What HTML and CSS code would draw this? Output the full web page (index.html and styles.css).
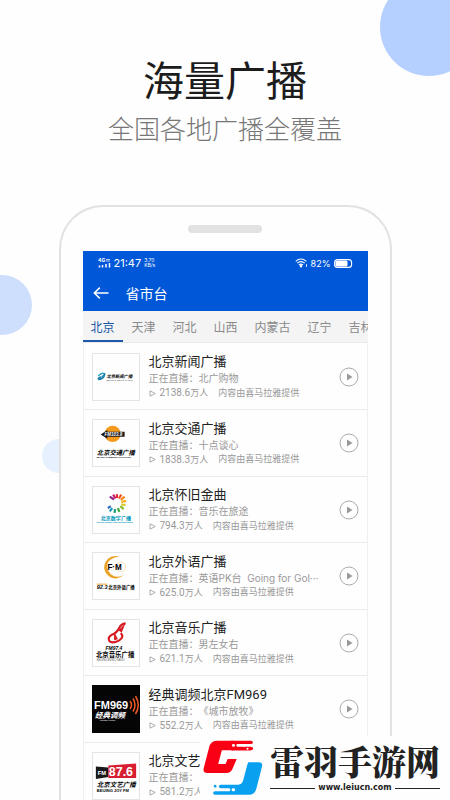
FILE: index.html
```html
<!DOCTYPE html>
<html lang="zh-CN">
<head>
<meta charset="utf-8">
<meta name="viewport" content="width=device-width, initial-scale=1">
<title>海量广播</title>
<link rel="stylesheet" href="styles.css">
</head>
<body>
<div class="page">
  <span class="bubble bubble-top"></span>
  <span class="bubble bubble-left"></span>
  <span class="bubble bubble-small"></span>

  <header class="hero">
    <h1 class="hero-title">海量广播</h1>
    <p class="hero-sub">全国各地广播全覆盖</p>
  </header>

  <main class="phone">
    <div class="speaker"></div>
    <div class="screen">
      <div class="topbar">
        <div class="status">
          <svg class="signal" viewBox="0 0 13 12" width="13" height="12"><text x="0" y="5" class="net">4G</text><path d="M8 2.5h4M8 4h4" stroke="#fff" stroke-width=".7"/><path d="M1.5 8.5v2M4.5 8v2.5M8 7v3.500M11.500 6v4.500" stroke="#fff" stroke-width="1.500"/></svg>
          <span class="time">21:47</span>
          <span class="speed"><span>3.70</span><span>KB/s</span></span>
          <svg class="wifi" viewBox="0 0 13 10" width="13" height="10" fill="none" stroke="#fff" stroke-width="1.100"><path d="M.7 3.300Q6 -1.300 11.300 3.300M2.300 5.200Q6 2 9.700 5.200M4 7Q6 5.300 8 7"/><circle cx="6" cy="8.300" r=".7" fill="#fff"/><path d="M11.500 6v3" stroke-width=".8"/></svg>
          <span class="percent">82%</span>
          <svg viewBox="0 0 19 9" width="19" height="9"><rect x=".6" y=".6" width="17" height="7.800" rx="3" fill="none" stroke="#fff" stroke-width="1.100"/><rect x="1.500" y="1.500" width="12" height="6" rx="1.500" fill="#fff"/></svg>
        </div>
        <div class="titlebar">
          <button class="back" type="button" aria-label="返回"><svg viewBox="0 0 16 12" width="16" height="12" fill="none" stroke="#fff" stroke-width="1.500"><path d="M15.500 6H1.500M6.800 .6L1.300 6l5.500 5.400"/></svg></button>
          <h2 class="title">省市台</h2>
        </div>
      </div>

      <nav class="tabs">
        <a class="tab active" href="#">北京</a>
        <a class="tab" href="#">天津</a>
        <a class="tab" href="#">河北</a>
        <a class="tab" href="#">山西</a>
        <a class="tab" href="#">内蒙古</a>
        <a class="tab" href="#">辽宁</a>
        <a class="tab" href="#">吉林</a>
      </nav>

      <ul class="stations">
        <li class="station">
          <svg class="logo" viewBox="0 0 48 48">
            <g fill="none" stroke-linecap="round"><path d="M6 22.500Q9 19 12 20.500Q13 22 9.500 23.500" stroke="#28a3c4" stroke-width="1.500"/><path d="M12 21Q11.500 26 6 26.500Q4.500 25.500 8 24" stroke="#1f7fa8" stroke-width="1.700"/></g>
            <text x="14" y="25" class="brush" font-size="4.500">北京新闻广播</text>
            <text x="14" y="28.300" font-size="2.600" fill="#555">BEIJING NEWS RADIO</text>
          </svg>
          <div class="info"><h3 class="name">北京新闻广播</h3><p class="live">正在直播：北广购物</p>
          <p class="meta"><svg class="tri" viewBox="0 0 7 7"><path d="M1 .8v5.400L6.200 3.500z"/></svg><span><span class="num">2138.6</span>万人</span><span class="source">内容由喜马拉雅提供</span></p></div>
          <button class="play" type="button" aria-label="播放"><svg viewBox="0 0 20 20"><circle cx="10" cy="10" r="9"/><path d="M8 6.500v7l5.500-3.500z"/></svg></button>
        </li>
        <li class="station">
          <svg class="logo" viewBox="0 0 48 48">
            <circle cx="20.500" cy="14.500" r="8.500" fill="#f39a1e"/><path d="M8 15L15 10.500V12.300H33V17.500H15V19.500z" fill="#191919"/>
            <text x="12" y="16.800" font-size="4.700" font-weight="bold" font-style="italic" fill="#fff">FM103.9</text>
            <text x="4" y="36" class="brush" font-size="6.600">北京交通广播</text>
            <text x="4" y="39.300" font-size="2.200" font-weight="bold">BEIJING COMMUNICATION RADIO</text>
          </svg>
          <div class="info"><h3 class="name">北京交通广播</h3><p class="live">正在直播：十点谈心</p>
          <p class="meta"><svg class="tri" viewBox="0 0 7 7"><path d="M1 .8v5.400L6.200 3.500z"/></svg><span><span class="num">1838.3</span>万人</span><span class="source">内容由喜马拉雅提供</span></p></div>
          <button class="play" type="button" aria-label="播放"><svg viewBox="0 0 20 20"><circle cx="10" cy="10" r="9"/><path d="M8 6.500v7l5.500-3.500z"/></svg></button>
        </li>
        <li class="station">
          <svg class="logo" viewBox="0 0 48 48">
            <g stroke-width="2.300" fill="none"><path d="M22 13l-4.500-3" stroke="#8c2d87"/><path d="M23.500 12l-2.500-4" stroke="#c81f6c"/><path d="M25 11.500V7.500" stroke="#e62c36"/><path d="M27 12l2.500-4" stroke="#ec5228"/><path d="M29 13.500l4-3.500" stroke="#f28a1e"/><path d="M29.500 15.500l5-1" stroke="#f6b31c"/><path d="M29.500 18l4.500 1" stroke="#d7ca22"/><path d="M28.500 20l3.500 3" stroke="#8cbc2d"/><path d="M26 22l1.500 4" stroke="#3ca93b"/><path d="M23 23l-.5 4" stroke="#169a76"/><path d="M20 22l-2.500 3.500" stroke="#1597bd"/><path d="M18.500 20l-3 2" stroke="#2865b8"/></g>
            <text x="8" y="34" font-size="5.300" font-weight="bold" fill="#0097bd">北京数字广播</text>
            <text x="4" y="37.800" font-size="2.300" font-weight="bold" fill="#0097bd">Beijing Digital Audio Broadcasting</text>
          </svg>
          <div class="info"><h3 class="name">北京怀旧金曲</h3><p class="live">正在直播：音乐在旅途</p>
          <p class="meta"><svg class="tri" viewBox="0 0 7 7"><path d="M1 .8v5.400L6.200 3.500z"/></svg><span><span class="num">794.3</span>万人</span><span class="source">内容由喜马拉雅提供</span></p></div>
          <button class="play" type="button" aria-label="播放"><svg viewBox="0 0 20 20"><circle cx="10" cy="10" r="9"/><path d="M8 6.500v7l5.500-3.500z"/></svg></button>
        </li>
        <li class="station">
          <svg class="logo" viewBox="0 0 48 48">
            <path d="M28 4A11.800 11.800 0 1 0 32 23A11 11 0 0 1 16 9Q21 4 28 4z" fill="#eba42b"/><circle cx="29" cy="14.500" r="5" fill="none" stroke="#eed4a0" stroke-width=".7"/>
            <text x="15" y="17.500" font-size="8.500" font-weight="bold">F·M</text>
            <text x="4" y="37.500" font-size="5.700" font-weight="bold" font-style="italic">92.3</text><text x="16" y="37.500" font-size="4.600" font-weight="bold">北京外语广播</text><path d="M4 32.500h11" stroke="#eba42b"/>
          </svg>
          <div class="info"><h3 class="name">北京外语广播</h3><p class="live">正在直播：英语PK台&nbsp; Going for Gol···</p>
          <p class="meta"><svg class="tri" viewBox="0 0 7 7"><path d="M1 .8v5.400L6.200 3.500z"/></svg><span><span class="num">625.0</span>万人</span><span class="source">内容由喜马拉雅提供</span></p></div>
          <button class="play" type="button" aria-label="播放"><svg viewBox="0 0 20 20"><circle cx="10" cy="10" r="9"/><path d="M8 6.500v7l5.500-3.500z"/></svg></button>
        </li>
        <li class="station">
          <svg class="logo" viewBox="0 0 48 48">
            <path d="M34 3.500Q29 4 27 9Q24 14 19.500 15.500Q15 18 17 22Q20 25 27 21.500Q33 18 29 13.500" fill="none" stroke="#d71920" stroke-width="2.200"/><path d="M34 3l-4 10l-3.500-2zM22 12l4 8l-4 1z" fill="#d71920"/>
            <text x="13" y="31" font-size="5.200" font-weight="bold" font-style="italic">FM97.4</text>
            <text x="3" y="39" font-size="6.700" font-weight="bold">北京音乐广播</text><text x="4" y="42.500" font-size="2.700" fill="#555">BEIJING MUSIC RADIO</text>
          </svg>
          <div class="info"><h3 class="name">北京音乐广播</h3><p class="live">正在直播：男左女右</p>
          <p class="meta"><svg class="tri" viewBox="0 0 7 7"><path d="M1 .8v5.400L6.200 3.500z"/></svg><span><span class="num">621.1</span>万人</span><span class="source">内容由喜马拉雅提供</span></p></div>
          <button class="play" type="button" aria-label="播放"><svg viewBox="0 0 20 20"><circle cx="10" cy="10" r="9"/><path d="M8 6.500v7l5.500-3.500z"/></svg></button>
        </li>
        <li class="station">
          <svg class="logo dark" viewBox="0 0 48 48">
            <rect width="48" height="48" fill="#050505"/><text x="2" y="24" font-size="11" font-weight="bold" fill="#fff">FM969</text>
            <g fill="none" stroke="#ee5a24" stroke-width="1.500"><path d="M38 16q3 4 0 8"/><path d="M41 13.500q4 6.500 0 13"/><path d="M43.500 11q5.500 9 0 18"/></g>
            <text x="3" y="33" class="brush light" font-size="7.500">经典调频</text><text x="8" y="36" font-size="2.500" fill="#fff">Classic Music</text>
          </svg>
          <div class="info"><h3 class="name">经典调频北京FM969</h3><p class="live">正在直播：《城市放牧》</p>
          <p class="meta"><svg class="tri" viewBox="0 0 7 7"><path d="M1 .8v5.400L6.200 3.500z"/></svg><span><span class="num">552.2</span>万人</span><span class="source">内容由喜马拉雅提供</span></p></div>
          <button class="play" type="button" aria-label="播放"><svg viewBox="0 0 20 20"><circle cx="10" cy="10" r="9"/><path d="M8 6.500v7l5.500-3.500z"/></svg></button>
        </li>
        <li class="station">
          <svg class="logo" viewBox="0 0 48 48">
            <path d="M3 14l13 1v10L3 27z" fill="#191919"/><path d="M16 13l29-2v15H16z" fill="#d71e32"/>
            <text x="5" y="23" font-size="6" font-weight="bold" fill="#fff">FM</text><text x="16.500" y="24.500" font-size="13" font-weight="bold" fill="#fff">87.6</text>
            <text x="4" y="36" class="brush" font-size="6.800">北京文艺广播</text><text x="4" y="40.500" font-size="4.200" font-weight="bold">BEIJING JOY FM</text>
          </svg>
          <div class="info"><h3 class="name">北京文艺</h3><p class="live">正在直播：</p>
          <p class="meta"><svg class="tri" viewBox="0 0 7 7"><path d="M1 .8v5.400L6.200 3.500z"/></svg><span><span class="num">581.2</span>万人</span></p></div>
        </li>
      </ul>
    </div>
  </main>

  <aside class="mark">
    <svg class="mark-logo" viewBox="16 20 178 166" width="60" height="56">
      <path d="M56 22H106V50H72L61 91H83L89 76H116L103 107Q98 118 86 118H29Q15 118 18 104L34 42Q39 22 56 22z" fill="#fa0014"/>
      <path d="M100 22H158Q164 22 164 27T158 32H138Q134 32 134 36T138 40H157Q165 40 165 45T157 51H100z" fill="#fa0014"/>
      <g fill="#fff"><rect x="102" y="32" width="9" height="8" rx="4"/><rect x="115" y="32" width="26" height="8" rx="4"/><circle cx="148" cy="46" r="3"/></g>
      <path d="M150 86H182Q194 86 191 99L174 165Q169 182 153 182H52Q46 182 46 177T52 172H73Q77 172 77 168T73 163H69Q63 163 63 158T69 153H118Q131 153 135 140L147 95Z" fill="#0aa0f0"/>
      <g fill="#fff"><rect x="72" y="163" width="25" height="9" rx="4"/><rect x="101" y="163" width="10" height="9" rx="4"/></g><circle cx="52" cy="157" r="4" fill="#0aa0f0"/>
    </svg>
    <div class="mark-text">
      <strong class="mark-name">雷羽手游网</strong>
      <span class="mark-url">www.leiucn.com</span>
    </div>
  </aside>
</div>
</body>
</html>
```
FILE: styles.css
```css
* { box-sizing: border-box; margin: 0; padding: 0; }

body {
  background: #fefefe;
  font-family: "Noto Sans", "Noto Sans CJK SC", sans-serif;
  color: #222;
  text-spacing-trim: space-all;
}

button { background: none; border: 0; display: block; cursor: pointer; }
svg { display: block; flex: none; }

.page {
  position: relative;
  height: 100vh;
  overflow: hidden;
}

.bubble { position: absolute; border-radius: 50%; }
.bubble-top { width: 98px; height: 98px; top: -22px; right: -28px; background: #b5d0ff; }
.bubble-left { width: 60px; height: 60px; top: 275px; left: -28px; background: #cddffd; }
.bubble-small { width: 34px; height: 34px; top: 439px; left: 42px; background: #e7f0fe; }

.hero { text-align: center; padding-top: 48px; font-family: "Noto Sans CJK SC", sans-serif; }
.hero-title { font-size: 41px; font-weight: 400; line-height: 60px; color: #1c1c1c; }
.hero-sub { font-size: 26px; font-weight: 300; line-height: 40px; color: #777; }

.phone {
  position: relative;
  width: 74%;
  margin: 57px auto 0;
  padding: 18px 22px 0;
  background: #fefefe;
  border: 2px solid #e2e2e2;
  border-bottom: 0;
  border-radius: 44px 44px 0 0;
}

.speaker { width: 74px; height: 8px; margin: 0 auto 18px; border-radius: 4px; background: #e2e2e2; }
.screen { overflow: hidden; }
.topbar { background: #0058d8; color: #fff; }

.status { display: flex; align-items: center; height: 24px; padding: 0 15px; font-family: Inter, sans-serif; }
.net { font-size: 5px; font-weight: 700; fill: #fff; }
.time { margin-left: 3px; font-size: 11px; }
.speed { display: flex; flex-direction: column; margin: 0 auto 0 3px; font-size: 5px; line-height: 5px; }
.percent { margin: 0 3px; font-size: 9px; }

.titlebar { display: flex; align-items: center; gap: 17px; height: 36px; padding: 0 10px; }
.title { font-size: 14px; font-weight: 400; line-height: 20px; font-family: "Noto Sans CJK SC", sans-serif; }

.tabs { display: flex; gap: 1px; height: 32px; background: #f4f4f4; border-bottom: 1px solid #e8e8e8; }
.tab {
  flex: none;
  padding: 0 8px;
  font-family: "Noto Sans CJK SC", sans-serif;
  font-size: 12px;
  line-height: 31px;
  color: #8a8a8a;
  text-decoration: none;
}
.tab.active { color: #1b58a8; border-bottom: 2px solid #1b58a8; }

.stations { list-style: none; padding-top: 1px; border: 1px solid #f0f0f0; border-width: 0 1px; }
.station { display: flex; align-items: center; height: 66px; padding: 0 8px; border-bottom: 1px solid #ebebeb; }
.station:nth-child(even) { height: 67px; }

.logo { width: 48px; height: 48px; border: 1px solid #e4e4e4; font-family: "Liberation Sans", "Noto Sans CJK SC", sans-serif; }
.logo.dark { border: 0; }
.brush { font-weight: 700; font-style: italic; }
.light { fill: #fff; }

.info { flex: 1; min-width: 0; margin-left: 9px; white-space: nowrap; font-family: Roboto, "Noto Sans CJK SC", sans-serif; }
.name { font-size: 13px; font-weight: 400; line-height: 18px; color: #222; }
.live { font-family: Inter, "Noto Sans CJK SC", sans-serif; font-size: 10px; line-height: 15px; color: #999; }
.meta { display: flex; align-items: center; font-size: 9px; line-height: 13px; color: #999; }
.num { font-size: 10px; }
.tri { width: 7px; height: 7px; margin-right: 4px; fill: none; stroke: #999; stroke-width: 0.8; }
.source { margin-left: 10px; }

.play { width: 20px; height: 20px; }
.play svg { width: 20px; height: 20px; fill: none; stroke: #aaa; }
.play path { fill: #999; stroke: none; }

.mark {
  position: absolute;
  right: 0;
  bottom: 0;
  display: flex;
  align-items: flex-start;
  gap: 7px;
  width: 250px;
  height: 64px;
  padding: 4px 10px 0 3px;
  background: #fefefe;
}
.mark-text { flex: 1; font-family: "Noto Serif CJK SC", "Noto Sans CJK SC", serif; color: #222; }
.mark-name { display: block; font-size: 34px; font-weight: 900; line-height: 42px; white-space: nowrap; }
.mark-url { display: flex; align-items: center; gap: 3px; font-family: "DejaVu Sans", sans-serif; font-size: 8px; font-weight: 700; line-height: 12px; }
.mark-url::before, .mark-url::after { content: ""; flex: 1; height: 1px; background: #222; }
```
